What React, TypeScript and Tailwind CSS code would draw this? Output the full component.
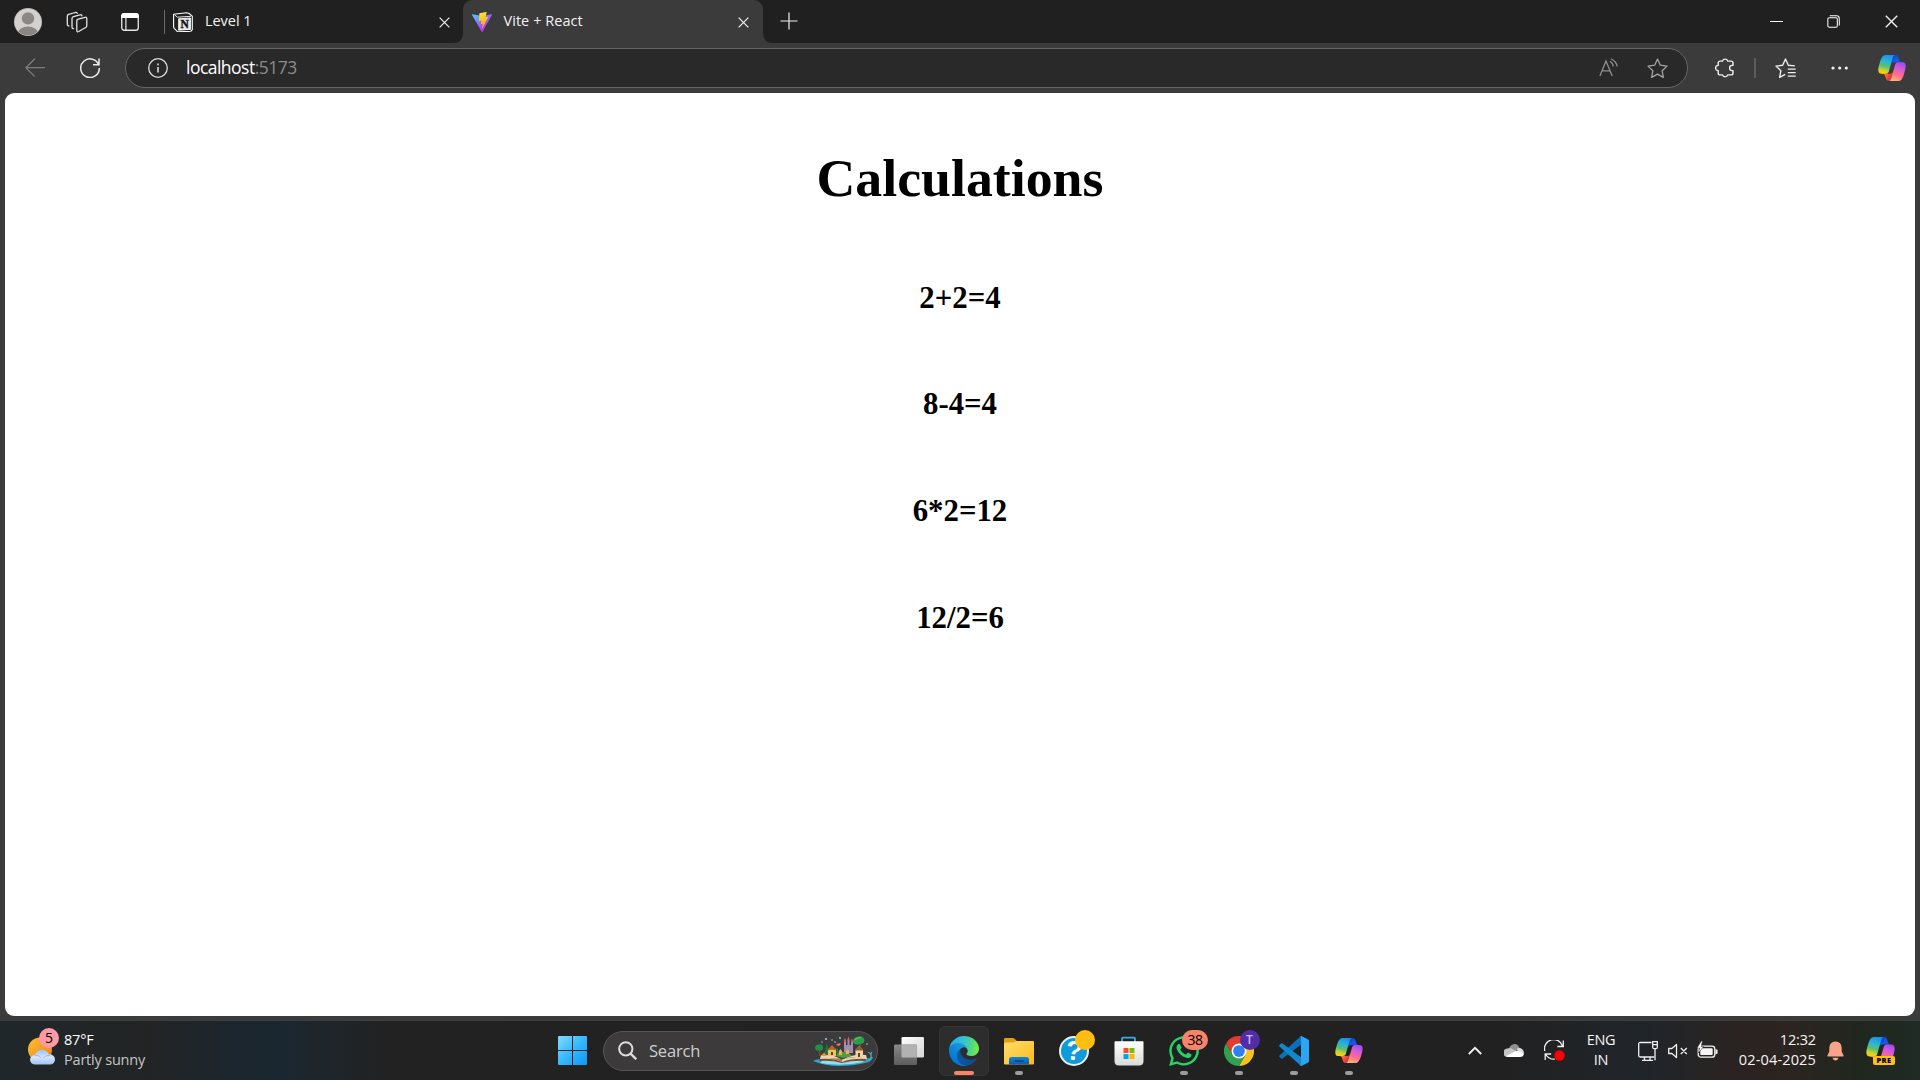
import React, { useId } from "react";
import { FaWhatsapp } from "react-icons/fa";

const UI = "font-['Open_Sans','Noto_Sans',sans-serif]";

function CopilotLogo({ className }: { className: string }) {
  const id = useId();
  const u = (n: string) => `url(#${id}${n})`;
  return (
    <svg viewBox="1.5 4 45 40" preserveAspectRatio="none" className={className}>
      <defs>
        <linearGradient id={`${id}a`} x1="0.2" y1="0" x2="1" y2="1">
          <stop offset="0" stopColor="#0a3fd0" />
          <stop offset="0.5" stopColor="#1c5be8" />
          <stop offset="1" stopColor="#0b2f9c" />
        </linearGradient>
        <linearGradient id={`${id}b`} x1="0" y1="0" x2="1" y2="0.6">
          <stop offset="0" stopColor="#ffb657" />
          <stop offset="0.5" stopColor="#ff5f3d" />
          <stop offset="1" stopColor="#c02b3c" />
        </linearGradient>
        <linearGradient id={`${id}c`} x1="0.6" y1="0" x2="0.35" y2="1">
          <stop offset="0" stopColor="#1a8fe8" />
          <stop offset="0.35" stopColor="#2bb4d8" />
          <stop offset="0.62" stopColor="#5cc06a" />
          <stop offset="0.85" stopColor="#d3d32c" />
          <stop offset="1" stopColor="#ffd000" />
        </linearGradient>
        <linearGradient id={`${id}d`} x1="0.75" y1="0" x2="0.35" y2="1">
          <stop offset="0" stopColor="#a04bf0" />
          <stop offset="0.35" stopColor="#d85bd8" />
          <stop offset="0.65" stopColor="#ff6c8a" />
          <stop offset="1" stopColor="#ffb36b" />
        </linearGradient>
      </defs>
      <path fill={u("a")} d="M34.142 7.325A4.63 4.63 0 0 0 29.7 4h-1.35a4.63 4.63 0 0 0-4.554 3.794L21.48 20.407l.575-1.965a4.63 4.63 0 0 1 4.444-3.33h7.853l3.294 1.282 3.175-1.283h-.926a4.63 4.63 0 0 1-4.443-3.325l-1.31-4.461z" />
      <path fill={u("b")} d="M14.33 40.656A4.63 4.63 0 0 0 18.779 44h2.87a4.63 4.63 0 0 0 4.629-4.51l.312-12.163-.654 2.233a4.63 4.63 0 0 1-4.443 3.329h-7.919l-2.823-1.532-3.057 1.532h.912a4.63 4.63 0 0 1 4.447 3.344l1.279 4.423z" />
      <path fill={u("c")} d="M29.5 4H13.46c-4.583 0-7.332 6.057-9.165 12.113C2.123 23.29-.72 32.885 7.503 32.885h6.925a4.63 4.63 0 0 0 4.456-3.358 2078.617 2078.617 0 0 1 4.971-17.156c.843-2.843 1.544-5.284 2.621-6.805C27.08 4.714 28.086 4 29.5 4z" />
      <path fill={u("d")} d="M18.498 44h16.04c4.582 0 7.332-6.058 9.165-12.115 2.171-7.177 5.013-16.775-3.208-16.775h-6.926a4.63 4.63 0 0 0-4.455 3.358 2084.036 2084.036 0 0 1-4.972 17.16c-.842 2.843-1.544 5.285-2.62 6.806-.604.852-1.61 1.566-3.024 1.566z" />
    </svg>
  );
}

function ViteLogo() {
  return (
    <svg viewBox="0 0 256 257" className="size-5">
      <defs>
        <linearGradient id="va" x1="-.8%" x2="57.6%" y1="7.7%" y2="78.4%">
          <stop offset="0" stopColor="#41D1FF" />
          <stop offset="1" stopColor="#BD34FE" />
        </linearGradient>
        <linearGradient id="vb" x1="43.4%" x2="50.3%" y1="2.2%" y2="89%">
          <stop offset="0" stopColor="#FFEA83" />
          <stop offset=".083" stopColor="#FFDD35" />
          <stop offset="1" stopColor="#FFA800" />
        </linearGradient>
      </defs>
      <path fill="url(#va)" d="M255.153 37.938L134.897 252.976c-2.483 4.44-8.862 4.466-11.382.048L.875 37.958c-2.746-4.814 1.371-10.646 6.827-9.67l120.385 21.517a6.537 6.537 0 0 0 2.322-.004l117.867-21.483c5.438-.991 9.574 4.796 6.877 9.62Z" />
      <path fill="url(#vb)" d="M185.432.063L96.44 17.501a3.268 3.268 0 0 0-2.634 3.014l-5.474 92.456a3.268 3.268 0 0 0 3.997 3.378l24.777-5.718c2.318-.535 4.413 1.507 3.936 3.838l-7.361 36.047c-.495 2.426 1.782 4.5 4.151 3.78l15.304-4.649c2.372-.72 4.652 1.36 4.15 3.788l-11.698 56.621c-.732 3.542 3.979 5.473 5.943 2.437l1.313-2.028l72.516-144.72c1.215-2.423-.88-5.186-3.54-4.672l-25.505 4.922c-2.396.462-4.435-1.77-3.759-4.114l16.646-57.705c.677-2.35-1.37-4.583-3.769-4.113Z" />
    </svg>
  );
}

function EdgeLogo() {
  return (
    <svg viewBox="0 0 256 256" className="size-[30px]">
      <defs>
        <linearGradient id="ea" x1="58" y1="177" x2="236" y2="177" gradientUnits="userSpaceOnUse">
          <stop offset="0" stopColor="#0c59a4" />
          <stop offset="1" stopColor="#114a8b" />
        </linearGradient>
        <linearGradient id="eb" x1="157" y1="98" x2="46" y2="220" gradientUnits="userSpaceOnUse">
          <stop offset="0" stopColor="#1b9de2" />
          <stop offset=".5" stopColor="#1286d8" />
          <stop offset="1" stopColor="#0078d4" />
        </linearGradient>
        <linearGradient id="ec" x1="10" y1="70" x2="245" y2="110" gradientUnits="userSpaceOnUse">
          <stop offset="0" stopColor="#2aa9e8" />
          <stop offset=".45" stopColor="#35c1d8" />
          <stop offset=".75" stopColor="#4fd880" />
          <stop offset="1" stopColor="#72ea4c" />
        </linearGradient>
      </defs>
      <path fill="url(#ea)" d="M231.07 190.54c-3.4 1.8-6.9 3.35-10.54 4.71a101.85 101.85 0 0 1-35.9 6.46c-47.32 0-88.54-32.55-88.54-74.32a31.48 31.48 0 0 1 16.43-27.31c-42.8 1.8-53.8 46.4-53.8 72.53 0 73.88 68.09 81.37 82.76 81.37 7.91 0 19.84-2.3 27-4.56l1.31-.44a128.34 128.34 0 0 0 66.6-52.8 4 4 0 0 0-5.32-5.64Z" />
      <path fill="url(#eb)" d="M105.73 241.42a79.2 79.2 0 0 1-22.74-21.34 80.72 80.72 0 0 1 29.53-120c3.12-1.47 8.45-4.13 15.54-4a32.35 32.35 0 0 1 25.69 13 31.88 31.88 0 0 1 6.36 18.66c0-.21 24.46-79.6-80-79.6-43.9 0-80 41.66-80 78.21a130.15 130.15 0 0 0 12.11 56 128 128 0 0 0 156.38 67.11 75.55 75.55 0 0 1-62.78-8z" />
      <path fill="url(#ec)" d="M152.29 148.86c-.81 1.05-3.3 2.5-3.3 5.66 0 2.61 1.7 5.12 4.72 7.23 14.38 10 41.49 8.68 41.56 8.68a59.56 59.56 0 0 0 30.27-8.35 61.38 61.38 0 0 0 30.43-52.88c.26-22.41-8-37.31-11.34-43.91C223.46 23.84 177.72 0 128 0A128 128 0 0 0 0 126.2c.48-36.54 36.8-66.05 80-66.05 3.5 0 23.46.34 42 10.07 16.34 8.58 24.9 18.94 30.85 29.21 6.18 10.67 7.28 24.15 7.28 29.52s-2.74 13.33-7.84 19.91Z" />
    </svg>
  );
}

function CloseGlyph({ className }: { className: string }) {
  return (
    <svg viewBox="0 0 12 12" className={className} fill="none" stroke="#f0f0f0" strokeWidth="1.3">
      <path d="M.7.7l10.6 10.6M11.3.7L.7 11.3" />
    </svg>
  );
}

function NotionIcon() {
  return (
    <svg viewBox="0 0 20 20" className="size-5">
      <path d="M.6 2.2L13.6.7l2.1.5 3.6 2.9v13.6l-1.6 1.6-13 .6-3.5-3.6-.6-1.2z" fill="#202020" stroke="#fff" strokeWidth="1.1" strokeLinejoin="round" />
      <path d="M1.6 2.9L4.5 5.2 18 4.3" fill="none" stroke="#fff" strokeWidth=".9" />
      <path d="M5.6 6.8l11.9-.8v11.4l-11.9.8z" fill="#e8e8e8" stroke="#fff" strokeWidth=".8" strokeLinejoin="round" />
      <text x="11.6" y="16" textAnchor="middle" fontSize="11.5" fontWeight="700" fontFamily="Liberation Serif, serif" fill="#111" stroke="#111" strokeWidth=".4">N</text>
    </svg>
  );
}

function TabStrip() {
  return (
    <div className="flex h-[43px] items-center bg-[#202020]">
      <svg viewBox="0 0 28 28" className="ml-3.5 size-7 shrink-0">
        <defs><clipPath id="av"><circle cx="14" cy="14" r="13.4" /></clipPath></defs>
        <circle cx="14" cy="14" r="14" fill="#b9b6b4" />
        <circle cx="14" cy="14" r="13.3" fill="#d3d0ce" />
        <g clipPath="url(#av)" fill="#8b8785">
          <circle cx="14" cy="10.4" r="6.2" />
          <ellipse cx="14" cy="26.4" rx="10.6" ry="8" />
        </g>
      </svg>
      <svg viewBox="0 0 22 22" className="ml-6 size-[22px] shrink-0" fill="none" stroke="#e4e4e4" strokeWidth="1.3" strokeLinejoin="round" strokeLinecap="round">
        <path d="M12.2 8.2l6.9-1.9q1.7-.4 1.7 1.3v7.2q0 1.300-1.200 1.700l-6.900 4q-1.900.9-1.900-1.200V9.800q0-1.200 1.400-1.600z" />
        <path d="M7.6 17.600q-1.600.3-1.600-1.600V7.600q0-1.500 1.400-1.900l6.600-1.900q1.700-.4 1.900 1" />
        <path d="M3 14.800q-1.700.3-1.700-1.600V5.200q0-1.400 1.400-1.800l6.500-1.900q1.700-.4 2 .9" />
      </svg>
      <svg viewBox="0 0 18 18" className="ml-[33px] size-[18px] shrink-0">
        <rect x=".75" y=".75" width="16.5" height="16.5" rx="2.6" fill="none" stroke="#e8e8e8" strokeWidth="1.3" />
        <path d="M.2 5V3q0-3 3-3h11.6q3 0 3 3v2z" fill="#fff" />
        <path d="M4.9 5v12.5" stroke="#e8e8e8" strokeWidth="1.2" />
      </svg>
      <div className="ml-[25px] h-6 w-px bg-[#6a6a6a]" />
      <div className="ml-2 flex h-full w-[290px] items-center">
        <div className="mt-px"><NotionIcon /></div>
        <span className="ml-3 flex-1 pb-0.5 text-[14.5px] tracking-[-0.05px] text-[#f2f2f2]">Level 1</span>
        <CloseGlyph className="mr-[13px] mt-px size-[11px]" />
      </div>
      <div className="relative flex h-full w-[300px] shrink-0 items-center rounded-t-[9px] bg-[#3b3b3b]">
        <svg viewBox="0 0 10 10" className="absolute -left-2.5 bottom-0 size-2.5"><path d="M10 0v10H0Q10 10 10 0z" fill="#3b3b3b" /></svg>
        <svg viewBox="0 0 10 10" className="absolute -right-2.5 bottom-0 size-2.5"><path d="M0 0v10h10Q0 10 0 0z" fill="#3b3b3b" /></svg>
        <div className="ml-[9px] mt-px"><ViteLogo /></div>
        <span className="ml-[11.5px] flex-1 pb-0.5 text-[14.5px] tracking-[0.05px] text-[#f2f2f2]">Vite + React</span>
        <CloseGlyph className="mr-3.5 mt-px size-[11px]" />
      </div>
      <svg viewBox="0 0 18 18" className="-mt-px ml-[17px] size-[18px]" stroke="#f0f0f0" strokeWidth="1.2"><path d="M9 .5v17M.5 9h17" /></svg>
      <div className="ml-auto flex items-center pr-[22px]">
        <div className="h-px w-[13px] bg-white" />
        <svg viewBox="0 0 14 14" className="ml-11 size-[13px]" fill="none" stroke="#fff" strokeWidth="1.1">
          <rect x=".9" y="2.9" width="10.2" height="10.2" rx="1.5" />
          <path d="M3 .8h7.3q2.9 0 2.9 2.9v7.5" />
        </svg>
        <CloseGlyph className="ml-[45px] size-[13px]" />
      </div>
    </div>
  );
}

function Toolbar() {
  return (
    <div className="flex h-[50px] items-center bg-[#3b3b3b]">
      <svg viewBox="0 0 20 20" className="ml-[25px] size-5" fill="none" stroke="#7d7d7d" strokeWidth="1.3"><path d="M20 9.7H.9M9.8.8L.9 9.7l8.9 8.9" /></svg>
      <svg viewBox="0 0 20 20" className="ml-[35px] size-5" fill="none" stroke="#ececec" strokeWidth="1.5"><path d="M18.9 7.5A9.3 9.3 0 1 0 19.3 10M19 .5v6.2h-6" /></svg>
      <div className="ml-[25px] flex h-10 w-[1563px] items-center rounded-full border border-[#666] bg-[#292929]">
        <svg viewBox="0 0 20 20" className="ml-[22px] size-5" fill="none" stroke="#dedede" strokeWidth="1.3"><circle cx="10" cy="10" r="9.3" /><path d="M10 9v5.5M10 5.5v1.7" strokeWidth="1.6" /></svg>
        <span className="ml-[18px] flex-1 pb-0.5 text-[17.5px] tracking-[-0.52px] text-white">localhost<span className="text-[#8c8c8c]">:5173</span></span>
        <svg viewBox="0 0 20 20" className="size-5" fill="none" stroke="#8e8e8e" strokeWidth="1.3">
          <path d="M.9 18L7 2.9 13.2 18M3 12.8h8M11 3.2q3 2 3.2 5.3M12 .8q5.5 3 6.3 7.7" />
        </svg>
        <svg viewBox="0 0 20 20" className="ml-7 mr-[19px] size-[21px]" fill="none" stroke="#a5a5a5" strokeWidth="1.2" strokeLinejoin="round">
          <path d="M10 1l2.7 5.9 6.4.8-4.7 4.4 1.2 6.4L10 15.4l-5.6 3.1 1.2-6.4L.9 7.7l6.4-.8z" />
        </svg>
      </div>
      <svg viewBox="0 0 20 20" className="ml-[27px] size-5" fill="none" stroke="#f0f0f0" strokeWidth="1.4" strokeLinejoin="round">
        <path d="M5.200 3.100h2.300a2.700 2.700 0 0 1 5.200 0h3.300q2 0 2 2v2.300h-.8a2.600 2.600 0 0 0 0 5.200h.8v2.300q0 2-2 2h-3.300a2.700 2.700 0 0 1-5.200 0H5.200q-2 0-2-2v-2.300a2.600 2.600 0 0 1 0-5.200V5.100q0-2 2-2z" />
      </svg>
      <div className="ml-[19px] h-5 w-0.5 bg-[#5c5c5c]" />
      <svg viewBox="0 0 20 20" className="ml-[18.5px] size-[21px]" fill="none" stroke="#f0f0f0" strokeWidth="1.3" strokeLinejoin="round">
        <path d="M18.9 7.5l-6.2-.6L10 1 7.3 6.9l-6.4.8 4.7 4.4-1.2 6.4 5.3-2.9M12.2 10.6h7.5M12.2 13.9h7.5M12.2 17.2h7.5" />
      </svg>
      <svg viewBox="0 0 18 4" className="ml-[35px] h-1 w-[18px]" fill="#f2f2f2"><circle cx="2" cy="2" r="1.6" /><circle cx="8.7" cy="2" r="1.6" /><circle cx="15.3" cy="2" r="1.6" /></svg>
      <CopilotLogo className="ml-[29.5px] h-[26px] w-7" />
    </div>
  );
}

const rows = [
  { text: "2+2=4", pad: "pt-0" },
  { text: "8-4=4", pad: "pt-0" },
  { text: "6*2=12", pad: "pt-px" },
  { text: "12/2=6", pad: "pt-px" },
];

function Page() {
  return (
    <main className="mx-[5px] mb-1 flex h-[923px] flex-col items-center rounded-[9px] bg-white pt-[54px] font-['Liberation_Serif',serif] font-bold text-black">
      <h1 className="text-[53.8px] leading-[62px]">Calculations</h1>
      <div className="mt-[71px] flex flex-col gap-[70px]">
        {rows.map((r) => (
          <h2 key={r.text} className={`text-center text-[30.8px] leading-9 ${r.pad}`}>{r.text}</h2>
        ))}
      </div>
    </main>
  );
}

function StorybookArt() {
  return (
    <svg viewBox="0 0 60 30" className="h-[30px] w-[60px]">
      <path d="M0 25q3-2 9-2h42q6-1 9-2-1 5-8 6-12 3-26 3T0 25z" fill="#2fa3d3" />
      <path d="M7 27q22 4 44-1l-3-2H10z" fill="#8fdff2" />
      <path d="M8 21l-2 4q13-1 23 2 11-3 24-2l-1-4q-14-1-23 3-8-4-21-3z" fill="#7a4d2c" />
      <path d="M8 19q13-1 21 5 9-6 24-5l1 4q-15-1-25 3-9-4-22-3z" fill="#ecd6b0" />
      <path d="M29 23v3q-8-4-18-4 11 0 18 1 7-2 19-2-11 1-19 2z" fill="#a87848" />
      <path d="M6 14h1.500v6H6zM46 6h1.800v8H46z" fill="#7d4b25" />
      <path d="M2 12q0-3 3-3.500 4-1 5 2 1 3-2 4-6 1-6-2.500z" fill="#1f9147" />
      <path d="M40 5.500Q40 2 44 .8q5-1.500 7 2 1.500 4-2 5-9 2-9-2.300z" fill="#2b9c4b" />
      <path d="M42 4q2-3 6-2" stroke="#68c860" strokeWidth="1.200" fill="none" />
      <path d="M11 18l3-11 3 11zM22 18l2-7 3 7z" fill="#1d7440" />
      <path d="M31 17V5l1-3 1 3v4h1.500V4l1-3.500 1 3.500v5H38V6l1-3 1 3v11z" fill="#a28cb6" />
      <path d="M31 6l1-4 1 4zM34.500 4.500l1-4 1 4zM38 6.500l1-4 1 4z" fill="#dd5750" />
      <path d="M15 14l4-4 4 4v6h-8z" fill="#edc06b" />
      <path d="M14.500 14l4.500-5 4.500 5z" fill="#b8692c" />
      <path d="M42.500 14l3.500-4 4 4v8h-7.500z" fill="#f0d29c" />
      <path d="M41.500 14.500L46 10l5 4.500z" fill="#8f5a32" />
      <path d="M8 20l3-3.500 3 3.500z" fill="#f0922e" />
      <path d="M23 20q3-5 7-4 4-1 9 4l-9 2z" fill="#4f9f47" />
      <path d="M26 19h3v-4l-1.500-2-1.500 2zM33 18h3v-3l-1.500-2-1.500 2z" fill="#f2b04a" />
      <path d="M23 9q2-3 5-1l-2 2z" fill="#e6766c" />
      <path d="M18 16h2v3h-2zM45 17h2v4h-2z" fill="#6b3c1d" />
      <path d="M55 24q4-1 2-6l-2.500-2q2.500 0 3 1 .5-1.500 2-1.500l-1 2.500q1.500 6-3.500 6z" fill="#3fb5b5" />
      <g fill="#9ed4ef"><circle cx="13" cy="3" r="1" /><circle cx="19" cy="4" r=".8" /><circle cx="27" cy="2" r=".9" /><circle cx="22" cy="6" r=".8" /><circle cx="54" cy="8" r=".8" /><circle cx="9" cy="6" r=".7" /></g>
    </svg>
  );
}

function TaskButton({ children, running = true, active = false }: { children: React.ReactNode; running?: boolean; active?: boolean }) {
  return (
    <div className="flex h-[60px] w-[55px] items-center justify-center">
      <div className={active ? "relative flex size-[50px] items-center justify-center rounded-md border border-[#363636] bg-[#2d2d2d]" : "relative flex size-[50px] items-center justify-center"}>
        {children}
        {active && <div className="absolute bottom-0 h-1 w-5 rounded-full bg-[#f7836b]" />}
        {running && !active && <div className="absolute bottom-px h-1 w-2 rounded-full bg-[#9c9c9c]" />}
      </div>
    </div>
  );
}

function Taskbar() {
  return (
    <div className="flex h-[60px] items-center border-t border-[#3d3f3f] bg-[#222222] bg-[linear-gradient(90deg,#20272a_0px,#222424_150px,#1b262e_240px,#1b2730_280px,#222_390px,#212121_1500px,#20252a_1640px,#2a2321_1740px,#2c2420_1790px,#20271f_1860px,#1f2b25_1920px)] text-[14.5px] leading-5">
      <div className="relative ml-7">
        <svg viewBox="0 0 28 28" className="size-7">
          <defs>
            <linearGradient id="sun" x1="0" y1="0" x2="1" y2="1"><stop offset="0" stopColor="#f9c42f" /><stop offset="1" stopColor="#f07b1a" /></linearGradient>
            <linearGradient id="cld" x1="0" y1="0" x2="0" y2="1"><stop offset="0" stopColor="#9dc0f5" /><stop offset=".5" stopColor="#d5e5fb" /><stop offset="1" stopColor="#a4c2f3" /></linearGradient>
          </defs>
          <circle cx="12" cy="12.5" r="12" fill="url(#sun)" />
          <path d="M6.500 27.500a4.700 4.700 0 0 1 .5-9.400 7.300 7.300 0 0 1 13.800-.6 5 5 0 0 1 2.200 10z" fill="url(#cld)" />
          <path d="M7 18.500q4-1 6 2.500M15 21q3-3 7-2.500" stroke="#7fa9ec" strokeWidth=".7" fill="none" />
        </svg>
        <div className="absolute -top-[9px] left-[11px] flex size-5 items-center justify-center rounded-full bg-[#ff99a4] text-[14px] text-black">5</div>
      </div>
      <div className="ml-2 w-[100px] pb-0.5 tracking-[-0.2px]">
        <div className="text-white">87°F</div>
        <div className="text-[#c6c6c6]">Partly sunny</div>
      </div>
      <svg viewBox="0 0 29 29" className="ml-[394px] size-[29px]">
        <defs><linearGradient id="win" x1="0" y1="0" x2="1" y2="1"><stop offset="0" stopColor="#7fdcff" /><stop offset=".5" stopColor="#35b8fd" /><stop offset="1" stopColor="#0f98f5" /></linearGradient></defs>
        <path d="M1 0h13v14H0V1q0-1 1-1zM15 0h13q1 0 1 1v13H15zM0 15h14v14H1q-1 0-1-1zM15 15h14v13q0 1-1 1H15z" fill="url(#win)" />
      </svg>
      <div className="ml-4 flex h-10 w-[275px] shrink-0 items-center rounded-full border border-[#575656] bg-[#3c3a3b]">
        <svg viewBox="0 0 20 20" className="ml-3.5 size-[19px]" fill="none" stroke="#dcdcdc" strokeWidth="2.1"><circle cx="8.2" cy="8.2" r="7" /><path d="M13.2 13.2l6 6" strokeWidth="2.5" /></svg>
        <span className="ml-[12px] flex-1 text-[16.5px] tracking-[-0.2px] text-[#cfcfcf]">Search</span>
        <div className="mr-[4px]"><StorybookArt /></div>
      </div>
      <div className="ml-[3.5px] flex">
        <TaskButton running={false}>
          <svg viewBox="0 0 30 28" className="h-7 w-[30px]">
            <defs>
              <linearGradient id="tv" x1="0" y1="0" x2="1" y2="1"><stop offset="0" stopColor="#fff" /><stop offset="1" stopColor="#d4d4d4" /></linearGradient>
              <linearGradient id="tw" x1="0" y1="0" x2="0" y2="1"><stop offset="0" stopColor="#888" /><stop offset="1" stopColor="#5d5d5d" /></linearGradient>
            </defs>
            <rect x="7.5" y="0" width="22.5" height="20.5" rx="1.2" fill="url(#tv)" />
            <rect x="0" y="7.5" width="23" height="20.5" rx="1.2" fill="url(#tw)" />
            <path d="M7.5 7.5H22q.8 0 .8.8v12.2H8.5q-1 0-1-1z" fill="#b2b2b2" />
          </svg>
        </TaskButton>
        <TaskButton active><EdgeLogo /></TaskButton>
        <TaskButton>
          <svg viewBox="0 0 30 28" className="h-7 w-[30px]">
            <defs>
              <linearGradient id="fo" x1="0" y1="0" x2="1" y2="1"><stop offset="0" stopColor="#ffdf70" /><stop offset="1" stopColor="#fdb913" /></linearGradient>
              <linearGradient id="fb" x1="0" y1="0" x2="0" y2="1"><stop offset="0" stopColor="#0e86dd" /><stop offset="1" stopColor="#0b5eab" /></linearGradient>
            </defs>
            <path d="M0 8V2.2Q0 1 1.2 1h7.6q1 0 1.8.8L13 4.3V8z" fill="#e2a10a" />
            <path d="M0 7q0-1.500 1.500-1.500h8L12.500 4H29q1 0 1 1v21.500q0 1-1 1H1q-1 0-1-1z" fill="url(#fo)" />
            <path d="M5 27.500v-5q0-2.500 2.500-2.500h15q2.500 0 2.500 2.500v5z" fill="url(#fb)" />
            <rect x="10.5" y="23.2" width="9.5" height="1.5" rx=".7" fill="#083f7d" />
          </svg>
        </TaskButton>
        <TaskButton running={false}>
          <div className="flex size-[30px] items-center justify-center rounded-full border-2 border-[#e9f4fa] bg-[#0d9bdc] font-['Liberation_Sans',sans-serif] text-[27px] font-bold text-white"><span className="rotate-6">?</span></div>
          <div className="absolute left-[26px] top-1 size-5 rounded-full bg-[#ffbe10]" />
        </TaskButton>
        <TaskButton running={false}>
          <svg viewBox="0 0 30 30" className="size-[30px]">
            <defs><linearGradient id="st" x1="0" y1="0" x2="0" y2="1"><stop offset="0" stopColor="#fff" /><stop offset="1" stopColor="#dadada" /></linearGradient></defs>
            <path d="M8 7V2.7q0-1 1-1h11q1 0 1 1V7" fill="none" stroke="#2cb4e8" strokeWidth="1.8" />
            <path d="M.5 6q0-.7.7-.7h27.600q.7 0 .7.7v19q0 4.500-4.500 4.500H5Q.5 29.500.5 25z" fill="url(#st)" />
            <path d="M9.500 12h5v5h-5z" fill="#f25022" /><path d="M15.500 12h5v5h-5z" fill="#7fba00" /><path d="M9.500 18h5v5h-5z" fill="#00a4ef" /><path d="M15.500 18h5v5h-5z" fill="#ffb900" />
          </svg>
        </TaskButton>
        <TaskButton>
          <FaWhatsapp className="size-[34px] text-[#25d366]" />
          <div className="absolute left-[23px] top-1 flex h-5 w-[26px] items-center justify-center rounded-full bg-[#f7836b] text-[14px] tracking-[-0.4px] text-black">38</div>
        </TaskButton>
        <TaskButton>
          <svg viewBox="0 0 48 48" className="size-[30px]">
            <path d="M24 12h20.800A24 24 0 0 1 24 48l10.400-18z" fill="#fcc21b" />
            <path d="M3.200 12l10.400 18L24 36l10.400-6L24 48A24 24 0 0 1 3.200 12z" fill="#2fa24f" />
            <path d="M3.200 12A24 24 0 0 1 44.800 12H24l-10.400 18z" fill="#e33b2e" />
            <circle cx="24" cy="24" r="12" fill="#fff" />
            <circle cx="24" cy="24" r="9.4" fill="#3080f2" />
          </svg>
          <div className="absolute left-[25.5px] top-1 flex size-5 items-center justify-center rounded-full bg-[#512da8] text-[12px] font-semibold text-[#cbbdf0]">T</div>
        </TaskButton>
        <TaskButton>
          <svg viewBox="0 0 30 30" className="size-[30px]">
            <path d="M22 0L.5 19.500q-.7.7 0 1.500l1.600 1.500q.7.500 1.500 0L29 3.500z" fill="#0a71bd" />
            <path d="M22 30L.5 10.500q-.7-.7 0-1.500l1.600-1.500q.7-.5 1.500 0L29 26.500z" fill="#1187d2" />
            <path d="M22 .1l7.100 3.300q.9.4.9 1.400v20.400q0 1-.9 1.400L22 29.900q-1 .3-1.700-.5 1.700 1 1.700-1V1.600q0-2-1.700-1 .7-.8 1.700-.5z" fill="#2aa6f2" />
          </svg>
        </TaskButton>
        <TaskButton><CopilotLogo className="h-[25px] w-7" /></TaskButton>
      </div>
      <svg viewBox="0 0 14 9" className="ml-auto h-[9px] w-3.5" fill="none" stroke="#f2f2f2" strokeWidth="1.9"><path d="M.8 8L7 1.8 13.2 8" /></svg>
      <svg viewBox="0 0 20 13" className="ml-[22px] h-[13px] w-5">
        <path d="M5 6q0-4.500 4.500-5.800Q14-.5 15.500 4L10 9z" fill="#8f8f8f" />
        <path d="M3.500 13A4.200 4.200 0 0 1 3.500 4.500Q6 3.200 9 5.300L15 8.500 10 13z" fill="#c4c4c4" />
        <path d="M13 4.600q3-1.500 5 .4 2 1.500 2 4l-6 1z" fill="#dedede" />
        <path d="M2 12L11.500 7.200q2.500-1 4 .3l4.500 2q-.5 3.500-4 3.500H4q-1.200 0-2-1z" fill="#fff" />
      </svg>
      <svg viewBox="0 0 21 21" className="ml-5 size-[21px]" fill="none" stroke="#f0f0f0" strokeWidth="1.3">
        <path d="M.8 11A9.200 9.200 0 0 1 18.500 6M19.300.5v6h-6M1.200 20v-6h6M1.800 14.500q3 5 9 4.700" />
        <circle cx="15.5" cy="15.5" r="5.2" fill="#f00" stroke="none" />
      </svg>
      <div className="ml-5 w-8 pb-px text-center tracking-[-0.3px] text-[#f5f5f5]"><div>ENG</div><div>IN</div></div>
      <svg viewBox="0 0 20 20" className="ml-[21px] size-5" fill="none" stroke="#f0f0f0" strokeWidth="1.3">
        <path d="M13.500 1.500H2.200q-1.500 0-1.500 1.500v11.500q0 1.500 1.500 1.500h14M6.500 16v3M12 16v3M4 19.300h11" />
        <path d="M14.700.7h4.600v5.500q0 1.500-1.500 1.500h-1.600q-1.500 0-1.500-1.500zM17 7.700v11.500M14.700 3.700h4.600" />
      </svg>
      <svg viewBox="0 0 20 16" className="ml-2.5 h-4 w-5" fill="none" stroke="#f0f0f0" strokeWidth="1.3" strokeLinejoin="round"><path d="M.7 5.500v5h3.200l4.600 4V1.500l-4.600 4zM12.800 5l6 6M18.800 5l-6 6" /></svg>
      <svg viewBox="0 0 21 18" className="-mt-0.5 ml-[9px] h-[18px] w-[21px]">
        <rect x="1.2" y="5.2" width="16.6" height="11" rx="2.8" fill="none" stroke="#f5f5f5" strokeWidth="1.3" />
        <rect x="3.3" y="7.3" width="12.4" height="6.8" rx="1.2" fill="#f5f5f5" />
        <path d="M18.500 8.500h1.300q.7 0 .7.7v3q0 .7-.7.7h-1.300z" fill="#f5f5f5" />
        <path d="M4.300 0L0 7h2.500L1.500 12l5-6.500H4.200L5.500 0z" fill="#fff" stroke="#222" strokeWidth=".5" />
      </svg>
      <div className="w-[98px] pb-0.5 text-right text-[#f5f5f5]"><div className="tracking-[-0.15px]">12:32</div><div className="tracking-[0.15px]">02-04-2025</div></div>
      <svg viewBox="0 0 17 20" className="ml-[11px] h-5 w-[17px]" fill="#f9a389">
        <path d="M8.500.5q6 0 6.200 6.500v3.500l1.900 4q.3.9-.6.9H1q-.9 0-.6-.9l1.900-4V7Q2.500.5 8.500.5z" /><path d="M5.500 16.800h6q-.5 2.700-3 2.700t-3-2.700z" />
      </svg>
      <div className="relative ml-[22px] mr-[25px]">
        <CopilotLogo className="h-[27px] w-[29px]" />
        <div className="absolute left-[7px] top-[19px] flex h-[9px] w-[22px] items-center justify-center rounded-[2px] bg-[#ffc20d] text-[7.5px] font-extrabold leading-none tracking-[0.3px] text-black">PRE</div>
      </div>
    </div>
  );
}

export default function App() {
  return (
    <div className={`flex h-[1080px] w-[1920px] flex-col overflow-hidden bg-[#3b3b3b] ${UI}`}>
      <TabStrip />
      <Toolbar />
      <Page />
      <Taskbar />
    </div>
  );
}
